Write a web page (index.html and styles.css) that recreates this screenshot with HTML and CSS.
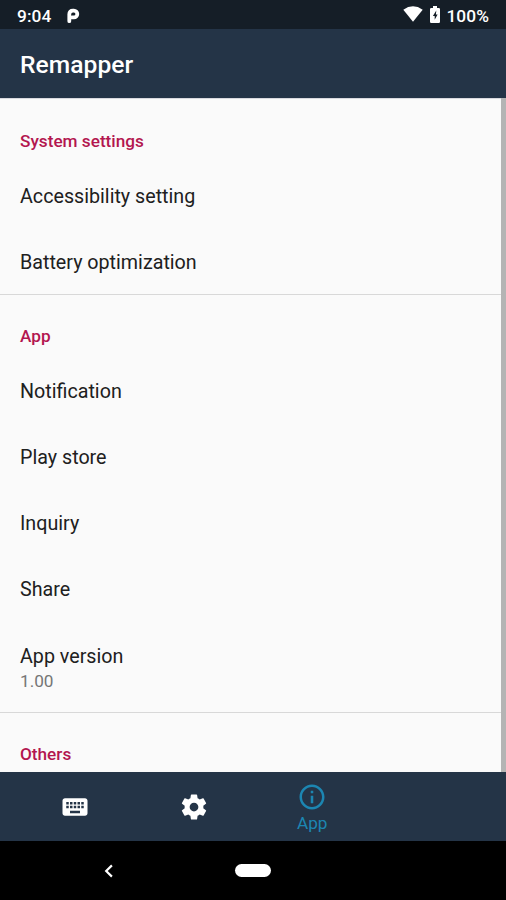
FILE: index.html
```
<!DOCTYPE html>
<html lang="en">
<head>
<meta charset="utf-8">
<title>Remapper</title>
<link rel="stylesheet" href="styles.css">
</head>
<body>
<div class="screen">
  <div class="status">
    <span class="clock">9:04</span>
    <svg class="pie" width="13" height="16" viewBox="0 0 13 16"><path d="M2.3 13.2V6.2Q2.3 2.6 6 2.6H6.9A3.3 3.3 0 0 1 6.9 9.4H5" fill="none" stroke="#fff" stroke-width="3.8" stroke-linecap="round" stroke-linejoin="round"/></svg>
    <svg class="wifi" width="20" height="16" viewBox="0 0 20 16"><path d="M.3 3.7Q10-3.2 19.7 3.7L10 15.7z" fill="#fff"/></svg>
    <svg class="battery" width="10" height="17" viewBox="0 0 10 17"><path d="M3 0h4v2h1.8Q10 2 10 3.2v12.6Q10 17 8.8 17H1.2Q0 17 0 15.8V3.2Q0 2 1.2 2H3z" fill="#fff"/><path d="M6.3 4.5 2.9 10h1.8v3.8L7.6 8.6H5.9z" fill="#151e27"/></svg>
    <span class="percent">100%</span>
  </div>
  <header class="toolbar"><h1>Remapper</h1></header>
  <main class="content">
    <section class="device">
      <h2>System settings</h2>
      <div class="row">Accessibility setting</div>
      <div class="row">Battery optimization</div>
    </section>
    <section class="app">
      <h2>App</h2>
      <div class="row">Notification</div>
      <div class="row">Play store</div>
      <div class="row">Inquiry</div>
      <div class="row">Share</div>
      <div class="row double"><span>App version</span><small>1.00</small></div>
    </section>
    <section class="others"><h2>Others</h2></section>
    <div class="scrollbar"></div>
  </main>
  <nav class="tabs">
    <div class="tab"><svg width="30" height="30" viewBox="0 0 24 24"><path fill="#fff" d="M20 5H4c-1.1 0-1.99.9-1.99 2L2 17c0 1.1.9 2 2 2h16c1.1 0 2-.9 2-2V7c0-1.1-.9-2-2-2zm-9 3h2v2h-2V8zm0 3h2v2h-2v-2zM8 8h2v2H8V8zm0 3h2v2H8v-2zm-1 2H5v-2h2v2zm0-3H5V8h2v2zm9 7H8v-2h8v2zm0-4h-2v-2h2v2zm0-3h-2V8h2v2zm3 3h-2v-2h2v2zm0-3h-2V8h2v2z"/></svg></div>
    <div class="tab"><svg width="30" height="30" viewBox="0 0 24 24"><path fill="#fff" d="M19.43 12.98c.04-.32.07-.64.07-.98s-.03-.66-.07-.98l2.11-1.65c.19-.15.24-.42.12-.64l-2-3.46c-.12-.22-.39-.3-.61-.22l-2.49 1c-.52-.4-1.08-.73-1.69-.98l-.38-2.65C14.46 2.18 14.25 2 14 2h-4c-.25 0-.46.18-.49.42l-.38 2.65c-.61.25-1.17.59-1.69.98l-2.49-1c-.23-.09-.49 0-.61.22l-2 3.46c-.13.22-.07.49.12.64l2.11 1.65c-.04.32-.07.65-.07.98s.03.66.07.98l-2.11 1.65c-.19.15-.24.42-.12.64l2 3.46c.12.22.39.3.61.22l2.49-1c.52.4 1.08.73 1.69.98l.38 2.65c.03.24.24.42.49.42h4c.25 0 .46-.18.49-.42l.38-2.65c.61-.25 1.17-.59 1.69-.98l2.49 1c.23.09.49 0 .61-.22l2-3.46c.12-.22.07-.49-.12-.64l-2.11-1.65zM12 15.5c-1.93 0-3.5-1.57-3.5-3.5s1.57-3.5 3.5-3.5 3.5 1.57 3.5 3.5-1.57 3.5-3.5 3.5z"/></svg></div>
    <div class="tab active"><svg width="30" height="30" viewBox="0 0 24 24"><path fill="#1c86b2" d="M11 17h2v-6h-2v6zm1-15C6.48 2 2 6.48 2 12s4.48 10 10 10 10-4.48 10-10S17.52 2 12 2zm0 18c-4.41 0-8-3.59-8-8s3.59-8 8-8 8 3.59 8 8-3.59 8-8 8zM11 9h2V7h-2v2z"/></svg><span>App</span></div>
    <div class="tab"></div>
  </nav>
  <div class="system">
    <svg class="back" width="10" height="14" viewBox="0 0 10 14"><path d="M7.9 1.4 2.2 7l5.7 5.6" fill="none" stroke="#fff" stroke-width="2.2"/></svg>
    <div class="pill"></div>
  </div>
</div>
</body>
</html>
```
FILE: styles.css
```
* { box-sizing: border-box; }
body { margin: 0; font-family: Roboto, sans-serif; background: #000; }
h1, h2 { margin: 0; font-weight: 500; }
svg { display: block; flex: none; }
.screen { width: 506px; height: 900px; display: flex; flex-direction: column; overflow: hidden; }
.status { height: 29px; flex: none; background: #151e27; color: #fff; display: flex; align-items: center; padding: 2px 17px 0; font-size: 17.3px; font-weight: 500; }
.clock { letter-spacing: .1px; }
.pie { margin: 0 0 0 16px; }
.wifi { margin-left: auto; margin-top: -3px; }
.battery { margin: -2px 6px 0 7px; }
.percent { letter-spacing: .1px; }
.toolbar { height: 69px; flex: none; background: #243447; color: #fff; display: flex; align-items: center; padding: 2px 20px 0; }
h1 { font-size: 24.6px; line-height: 28px; letter-spacing: .05px; }
.content { flex: 1; min-height: 0; position: relative; overflow: hidden; background: #fafafa; box-shadow: inset 0 1px #d9d9df; }
section { border-bottom: 1px solid #d8d8d8; padding-left: 20px; }
.device { height: 197px; }
h2 { height: 65px; padding-top: 32px; line-height: 22px; font-size: 17.2px; color: #b3164f; }
.app h2 { height: 64px; padding-top: 30px; }
.others h2 { padding-top: 30px; }
.row { height: 66px; display: flex; flex-direction: column; justify-content: center; font-size: 19.7px; line-height: 24px; color: #202020; }
.device .row { padding-top: 2px; }
.double { height: 89px; padding-top: 2px; }
small { font-size: 17.2px; line-height: 24px; color: #757575; }
.scrollbar { position: absolute; top: 0; right: 0; width: 5px; height: 100%; background: #b4b4b4; }
.tabs { height: 69px; flex: none; background: #243447; padding: 0 16px; display: grid; grid-template-columns: repeat(4, 1fr); }
.tab { display: flex; flex-direction: column; align-items: center; justify-content: center; }
.active { color: #1c86b2; font-size: 17.2px; line-height: 20px; justify-content: flex-start; padding-top: 10px; }
.active span { margin-top: 1px; }
.system { height: 59px; flex: none; background: #000; display: flex; align-items: center; padding-left: 104px; }
.pill { width: 36px; height: 13px; margin-left: 121px; border-radius: 7px; background: #fff; }
```
